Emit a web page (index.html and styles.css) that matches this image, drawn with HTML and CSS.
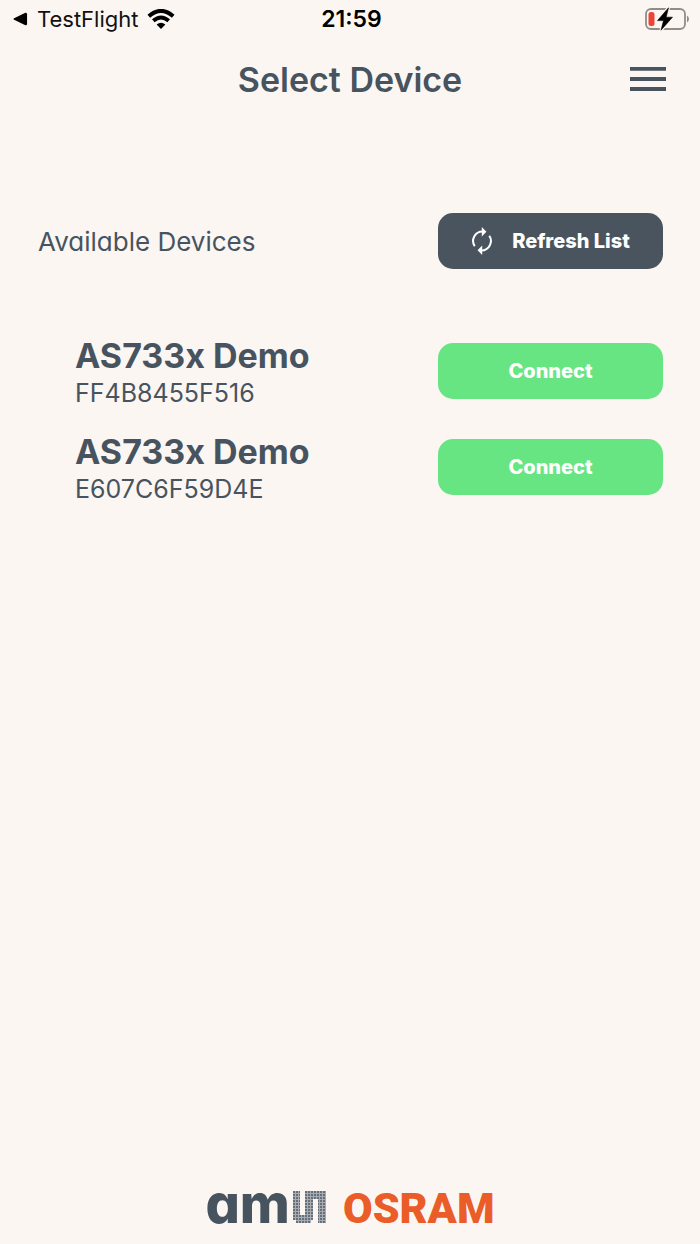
FILE: index.html
```html
<!DOCTYPE html>
<html lang="en">
<head>
<meta charset="utf-8">
<meta name="viewport" content="width=device-width, initial-scale=1">
<title>Select Device</title>
<link rel="stylesheet" href="styles.css">
</head>
<body>
<div class="screen">
  <div class="status">
    <div class="status-left">
      <svg class="back" viewBox="0 0 16 14" aria-hidden="true"><path d="M1.2 6.2 13.2.4Q15 0 15 2v10q0 2-1.800 1.600L1.200 7.800Q-.2 7 1.200 6.200Z"/></svg>
      <a class="back-link" href="#">TestFlight</a>
      <svg class="wifi" viewBox="0 0 28 20" aria-hidden="true">
        <path d="M1.800 7.200Q14-3.400 26.200 7.200M6.300 11.800Q14 5.200 21.700 11.800" fill="none" stroke="#000" stroke-width="4"/>
        <path d="M14 20 9.600 15.600Q14 12 18.400 15.600Z"/>
      </svg>
    </div>
    <time class="clock">21:59</time>
    <svg class="battery" viewBox="0 0 46 24" aria-hidden="true">
      <rect x="2" y="2" width="39" height="20" rx="5" fill="none" stroke="#918c89" stroke-width="1.800"/>
      <path d="M43 8.500q2 1 2 3.500t-2 3.500Z" fill="#918c89"/>
      <rect x="4.500" y="5" width="6" height="14" rx="2.500" fill="#ec4436"/>
      <path d="M24.500.8 13.500 13.600H19.500L17 23.200 28.500 10.200H22.200Z" stroke="#fcf6f2" stroke-width="3"/>
      <path d="M24.500.8 13.500 13.600H19.500L17 23.200 28.500 10.200H22.200Z" stroke="#000" stroke-width=".6"/>
    </svg>
  </div>
  <header class="header">
    <h1 class="title">Select Device</h1>
    <button class="menu" type="button" aria-label="Menu">
      <svg viewBox="0 0 36 24" aria-hidden="true"><path d="M0 0H36V3.800H0ZM0 10H36V14H0ZM0 20H36V24H0Z" fill="#475460"/></svg>
    </button>
  </header>
  <main class="main">
    <div class="toolbar">
      <h2 class="label">Available Devices</h2>
      <button class="button dark" type="button">
        <svg class="refresh" viewBox="0 0 22 28" aria-hidden="true">
          <path d="M3.700 19.200A9.400 9.400 0 0 1 11.500 4.600M18.300 8.800A9.400 9.400 0 0 1 10.500 23.400" fill="none" stroke="#fff" stroke-width="2"/>
          <path d="M10.800 0 15.400 4.700 10.800 9.400ZM11.200 18.600 6.600 23.300 11.200 28Z" fill="#fff"/>
        </svg>
        <span>Refresh List</span>
      </button>
    </div>
    <ul class="devices">
      <li class="device">
        <div><h3 class="name">AS733x Demo</h3><p class="id">FF4B8455F516</p></div>
        <button class="button green" type="button">Connect</button>
      </li>
      <li class="device">
        <div><h3 class="name">AS733x Demo</h3><p class="id">E607C6F59D4E</p></div>
        <button class="button green" type="button">Connect</button>
      </li>
    </ul>
  </main>
  <footer class="footer">
    <span class="am">am</span>
    <svg class="mesh" viewBox="0 0 33 32" role="img" aria-label="s">
      <defs><pattern id="dots" width="3" height="3" patternUnits="userSpaceOnUse"><rect width="3" height="3" fill="#a8acb0"/><rect width="2" height="2" fill="#65707a"/></pattern></defs>
      <path d="M0 0H7V24H12V0H33V32H25V8H20V29H18V32H3V29H0Z" fill="url(#dots)"/>
    </svg>
    <span class="osram">OSRAM</span>
  </footer>
</div>
</body>
</html>
```
FILE: styles.css
```css
* { box-sizing: border-box; }

body {
  margin: 0;
  background: #fcf6f2;
  color: #475460;
  font-family: Inter, "Liberation Sans", sans-serif;
  font-feature-settings: "cv11";
}

h1, h2, h3, p, ul { margin: 0; padding: 0; }

.screen {
  display: flex;
  flex-direction: column;
  min-height: 100vh;
}

.status {
  display: grid;
  grid-template-columns: 1fr auto 1fr;
  align-items: center;
  height: 38px;
  padding: 0 10px 0 13px;
  color: #000;
}

.status-left { display: flex; align-items: center; gap: 9px; }
.back { width: 15px; height: 14px; }
.back-link {
  color: #111;
  font-size: 22px;
  text-decoration: none;
  font-feature-settings: normal;
}
.wifi { width: 28px; height: 20px; }
.clock { font-size: 23px; font-weight: 600; }
.battery { width: 46px; height: 24px; justify-self: end; }

.header {
  display: grid;
  grid-template-columns: 1fr auto 1fr;
  align-items: center;
  height: 82px;
  padding: 0 34px;
}

.title { grid-column: 2; font-size: 34px; font-weight: 600; }

.menu {
  justify-self: end;
  padding: 0;
  border: 0;
  background: none;
}
.menu svg { display: block; width: 36px; height: 24px; }

.main { flex: 1; padding: 93px 37px 0 38px; }

.toolbar, .device {
  display: flex;
  align-items: center;
  justify-content: space-between;
}

.label { font-size: 26px; font-weight: 400; }

.button {
  display: flex;
  align-items: center;
  justify-content: center;
  gap: 19px;
  width: 225px;
  height: 56px;
  border: 0;
  border-radius: 15px;
  color: #fff;
  font: inherit;
  font-size: 20px;
  font-weight: 800;
}
.dark { background: #4a545e; }
.green { background: #68e583; }
.refresh { width: 22px; height: 28px; }

.devices {
  display: flex;
  flex-direction: column;
  gap: 20px;
  padding: 64px 0 0 37px;
  list-style: none;
}
.device { height: 76px; }
.name { padding-top: 4px; font-size: 34px; line-height: 40px; font-weight: 700; }
.id { font-size: 25px; line-height: 34px; }

.footer {
  display: flex;
  align-items: baseline;
  justify-content: center;
  height: 72px;
}
.am { font-size: 54px; line-height: 64px; font-weight: 800; }
.mesh { width: 33px; height: 32px; margin: 0 17px 0 3px; }
.osram {
  color: #eb5d28;
  font-family: Roboto, sans-serif;
  font-size: 43px;
  line-height: 56px;
  font-weight: 900;
}
```
